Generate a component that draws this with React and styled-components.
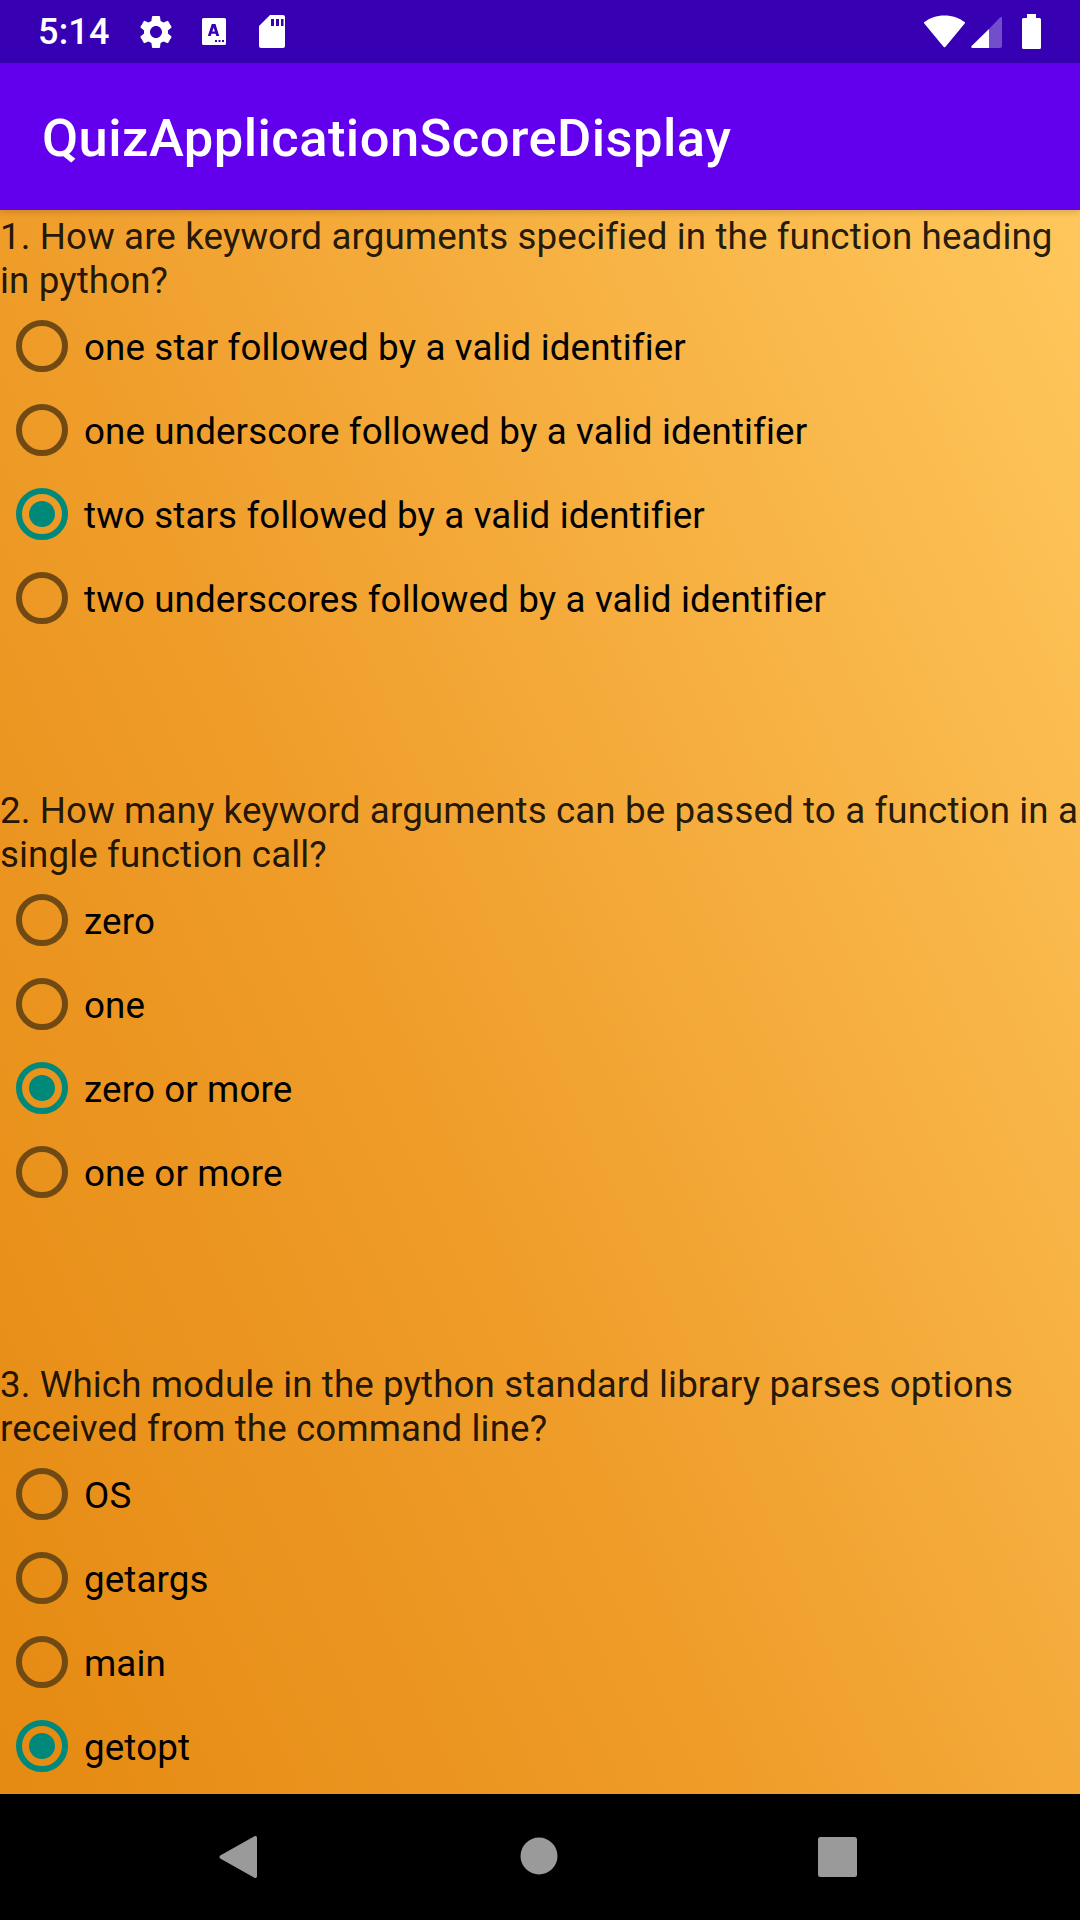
import React from "react";
import styled, { createGlobalStyle } from "styled-components";

const Global = createGlobalStyle`
  html, body { margin: 0; padding: 0; background: #000; }
  body { font-family: Roboto, "Liberation Sans", sans-serif; }
  * { box-sizing: border-box; }
`;

const Screen = styled.div`
  width: 1080px;
  height: 1920px;
  display: flex;
  flex-direction: column;
  overflow: hidden;
`;

const StatusBar = styled.div`
  height: 63px;
  flex: none;
  background: #3700b3;
  display: flex;
  align-items: center;
  justify-content: space-between;
  padding: 0 39px 0 38px;
  color: #fff;
`;

const StatusGroup = styled.div`
  display: flex;
  align-items: center;
`;

const Clock = styled.span`
  font-size: 36px;
  font-weight: 500;
  letter-spacing: 0.2px;
  margin-right: 26px;
`;

const StatusIcon = styled.svg`
  display: block;
  flex: none;
  margin-left: ${(p) => p.$ml || 0}px;
`;

const AppBar = styled.header`
  height: 147px;
  flex: none;
  background: #6200ee;
  display: flex;
  align-items: center;
  padding: 4px 0 0 42px;
  position: relative;
  z-index: 1;
  box-shadow: 0 2px 7px rgba(0, 0, 0, 0.16);
`;

const Title = styled.h1`
  margin: 0;
  font-size: 52.5px;
  line-height: 1;
  font-weight: 500;
  letter-spacing: 0.45px;
  color: #fff;
`;

const Content = styled.main`
  flex: 1;
  min-height: 0;
  overflow: hidden;
  background: linear-gradient(65deg, #e58a12 0%, #ef9c29 40%, #ffc75c 100%);
`;

const Question = styled.section`
  height: 574px;
`;

const Prompt = styled.p`
  margin: 0;
  font-size: 36.75px;
  line-height: 43.5px;
  padding: 5px 0 2px;
  color: rgba(0, 0, 0, 0.87);
  letter-spacing: 0.1px;
`;

const Option = styled.div`
  height: 84px;
  display: flex;
  align-items: center;
  padding-left: 16px;
`;

const Ring = styled.span`
  width: 52px;
  height: 52px;
  flex: none;
  border-radius: 50%;
  border: 6px solid ${(p) => (p.$on ? "#00897b" : "#704a12")};
  display: flex;
  align-items: center;
  justify-content: center;
  margin-right: 16px;
`;

const Dot = styled.span`
  width: 26px;
  height: 26px;
  border-radius: 50%;
  background: #00897b;
`;

const OptionText = styled.span`
  font-size: 36.75px;
  letter-spacing: 0.12px;
  color: #000;
  position: relative;
  top: 1px;
`;

const NavBar = styled.nav`
  height: 126px;
  flex: none;
  background: #000;
  position: relative;
`;

const NavIcon = styled.svg`
  position: absolute;
  left: ${(p) => p.$x}px;
  top: ${(p) => p.$y}px;
`;

const questions = [
  {
    q: "1. How are keyword arguments specified in the function heading in python?",
    o: [
      "one star followed by a valid identifier",
      "one underscore followed by a valid identifier",
      "two stars followed by a valid identifier",
      "two underscores followed by a valid identifier",
    ],
    s: 2,
  },
  {
    q: "2. How many keyword arguments can be passed to a function in a single function call?",
    o: ["zero", "one", "zero or more", "one or more"],
    s: 2,
  },
  {
    q: "3. Which module in the python standard library parses options received from the command line?",
    o: ["OS", "getargs", "main", "getopt"],
    s: 3,
  },
];

export default function App() {
  return (
    <Screen>
      <Global />
      <StatusBar>
        <StatusGroup>
          <Clock>5:14</Clock>
          <StatusIcon width="40" height="40" viewBox="0 0 24 24" fill="#fff">
            <path d="M19.14 12.94c.04-.3.06-.61.06-.94 0-.32-.02-.64-.07-.94l2.03-1.58a.49.49 0 0 0 .12-.61l-1.92-3.32a.488.488 0 0 0-.59-.22l-2.39.96c-.5-.38-1.03-.7-1.62-.94l-.36-2.54a.484.484 0 0 0-.48-.41h-3.84c-.24 0-.43.17-.47.41l-.36 2.54c-.59.24-1.13.57-1.62.94l-2.39-.96c-.22-.08-.47 0-.59.22L2.74 8.87c-.12.21-.08.47.12.61l2.03 1.58c-.05.3-.09.63-.09.94s.02.64.07.94l-2.03 1.58a.49.49 0 0 0-.12.61l1.92 3.32c.12.22.37.29.59.22l2.39-.96c.5.38 1.03.7 1.62.94l.36 2.54c.05.24.24.41.48.41h3.84c.24 0 .44-.17.47-.41l.36-2.54c.59-.24 1.13-.56 1.62-.94l2.39.96c.22.08.47 0 .59-.22l1.92-3.32c.12-.22.07-.47-.12-.61l-2.01-1.58zM12 15.6c-1.98 0-3.6-1.62-3.6-3.6s1.62-3.6 3.6-3.6 3.6 1.62 3.6 3.6-1.62 3.6-3.6 3.6z" />
          </StatusIcon>
          <StatusIcon $ml={26} width="24" height="27" viewBox="0 0 24 27">
            <path fill="#fff" fillRule="evenodd" d="M1.500 0h21A1.500 1.500 0 0 1 24 1.500v24a1.500 1.500 0 0 1-1.500 1.500h-21A1.500 1.500 0 0 1 0 25.500v-24A1.500 1.500 0 0 1 1.500 0zM9.800 6 5.800 18h2.900l.7-2.300h4.200l.7 2.300h2.900L13.500 6H9.800zm1.800 3.400 1.300 4.100h-2.600l1.300-4.100zM13 22v2h2v-2h-2zm3.500 0v2h2v-2h-2zm3.500 0v2h2v-2h-2z" />
          </StatusIcon>
          <StatusIcon $ml={33} width="26" height="33" viewBox="0 0 26 33">
            <path fill="#fff" fillRule="evenodd" d="M11 0h13a2 2 0 0 1 2 2v29a2 2 0 0 1-2 2H2a2 2 0 0 1-2-2V11L11 0zm1 4v7h3V4h-3zm5 0v7h3V4h-3zm5 0v7h2.500V4H22z" />
          </StatusIcon>
        </StatusGroup>
        <StatusGroup>
          <StatusIcon width="41" height="33" viewBox="0 0 42 33">
            <path fill="#fff" d="M21 0C12.800 0 5.700 2.500.4 6.800a1 1 0 0 0-.1 1.400L20 32a1.300 1.300 0 0 0 2 0L41.700 8.200a1 1 0 0 0-.1-1.400C36.300 2.500 29.200 0 21 0z" />
          </StatusIcon>
          <StatusIcon $ml={6} width="31" height="32" viewBox="0 0 31 32">
            <path fill="#fff" fillOpacity="0.3" d="M18 13 29 1.500C30 .5 31 1 31 2.500V30a2 2 0 0 1-2 2H18V13z" />
            <path fill="#fff" d="M18 13V32H1.500C.3 32-.3 30.800.6 30L18 13z" />
          </StatusIcon>
          <StatusIcon $ml={20} width="19" height="35" viewBox="0 0 19 35">
            <path fill="#fff" d="M5 0h9v4h3.500A1.500 1.500 0 0 1 19 5.500v28a1.500 1.500 0 0 1-1.500 1.500h-16A1.500 1.500 0 0 1 0 33.500v-28A1.500 1.500 0 0 1 1.500 4H5V0z" />
          </StatusIcon>
        </StatusGroup>
      </StatusBar>
      <AppBar>
        <Title>QuizApplicationScoreDisplay</Title>
      </AppBar>
      <Content>
        {questions.map((q) => (
          <Question key={q.q}>
            <Prompt>{q.q}</Prompt>
            {q.o.map((o, i) => (
              <Option key={o}>
                <Ring $on={i === q.s}>{i === q.s && <Dot />}</Ring>
                <OptionText>{o}</OptionText>
              </Option>
            ))}
          </Question>
        ))}
      </Content>
      <NavBar>
        <NavIcon $x={219} $y={41} width="38" height="44" viewBox="0 0 38 44">
          <path fill="#9a9a9a" d="M35 1.500c1.400-1.100 3-.5 3 1.300v38.400c0 1.800-1.600 2.400-3 1.300L1.200 23.500c-1-.8-1-2.200 0-3z" />
        </NavIcon>
        <NavIcon $x={520} $y={43} width="38" height="38" viewBox="0 0 38 38">
          <circle cx="19" cy="19" r="18.500" fill="#9a9a9a" />
        </NavIcon>
        <NavIcon $x={818} $y={43} width="39" height="40" viewBox="0 0 39 40">
          <rect width="39" height="40" rx="2.500" fill="#9a9a9a" />
        </NavIcon>
      </NavBar>
    </Screen>
  );
}
